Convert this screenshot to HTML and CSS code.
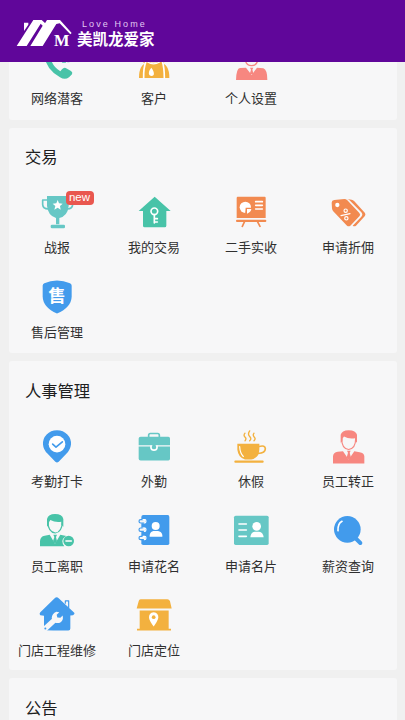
FILE: index.html
```html
<!DOCTYPE html>
<html lang="zh-CN">
<head>
<meta charset="utf-8">
<title>美凯龙爱家</title>
<link rel="stylesheet" href="styles.css">
</head>
<body>
<header class="header">
  <svg class="logo" viewBox="48 54 168 90">
    <path fill="#fff" d="M50 138L100 60H125L139 73L98 138H91L128 77L122 71L80 138ZM72 68H85V74L72 93ZM92 138L141 60H180L215 99L211 103L179 70L169 72L128 138Z"/>
    <text class="logo-m" x="162" y="138">M</text>
  </svg>
  <div class="brand">
    <span class="brand-en">Love Home</span>
    <span class="brand-cn">美凯龙爱家</span>
  </div>
</header>
<main class="content">
  <section class="card card-first">
    <div class="grid">
      <div class="item">
        <svg class="icon green" viewBox="117 135 108 108"><path d="M133 166Q138 209 180 232Q195 241 207 232L216 223Q219 217 213 213L197 204Q191 202 186 208L181 214Q163 203 156 187L163 178L150 155Z"/><path class="line green-line" d="M188 186H196M202 184H208"/></svg>
        <span class="label">网络潜客</span>
      </div>
      <div class="item">
        <svg class="icon yellow" viewBox="408 135 108 108"><circle cx="441" cy="173" r="18"/><circle cx="481" cy="173" r="18"/><path d="M417 234Q417 190 444 188H480Q508 190 508 234Z"/><path class="line" d="M438 184Q430 204 431 234M487 184Q493 204 493 234" /><path class="line thin" d="M443 186Q460 197 479 186"/><path fill="#fff" d="M454 203Q443 216 448 225Q455 231 461 225Q464 216 454 203Z"/></svg>
        <span class="label">客户</span>
      </div>
      <div class="item">
        <svg class="icon coral" viewBox="90 135 108 108"><path class="line coral-line" d="M128 165V184Q131 196 146 197Q161 196 163 184V165"/><path d="M99 240Q100 205 111 204L129 203L146 225L162 203L181 205Q193 209 193 240Z"/><path d="M141 203H151L148 209L152 223H140L144 209Z"/></svg>
        <span class="label">个人设置</span>
      </div>
    </div>
  </section>

  <section class="card">
    <h2 class="title">交易</h2>
    <div class="grid">
      <div class="item">
        <svg class="icon teal" viewBox="117 162 108 108"><path d="M141 168H206V198Q203 228 178 234V253H168V234Q144 227 141 198Z"/><path class="line teal-line" d="M141 180H128V194Q129 207 145 207M206 180H218V194Q217 207 202 207"/><rect x="152" y="254" width="43" height="11" rx="4"/><path fill="#fff" d="M173 180L177 190L188 191L180 198L182 209L173 203L163 209L166 198L158 191L169 190Z"/></svg>
        <span class="badge">new</span>
        <span class="label">战报</span>
      </div>
      <div class="item">
        <svg class="icon green" viewBox="408 162 108 108"><path d="M464 170L512 213H499V257Q499 262 494 262H434Q429 262 429 257V213H416Z"/><circle class="line" cx="463" cy="214" r="10"/><path class="line" d="M463 224V249M463 236H472M463 246H472"/></svg>
        <span class="label">我的交易</span>
      </div>
      <div class="item">
        <svg class="icon orange" viewBox="90 42 108 108"><path d="M104 50H185Q188 50 188 54V114H101V54Q101 50 104 50Z"/><rect x="99" y="119" width="91" height="7" rx="3"/><path class="line orange-line" d="M125 124L118 139M163 124L171 139"/><circle cx="127" cy="82" r="17" fill="#fff"/><path d="M128 83H149V105H126Z"/><path fill="#fff" d="M132 87H145Q144 97 132 101Z"/><path class="line" d="M158 65H178M158 76H178M158 87H178"/></svg>
        <span class="label">二手实收</span>
      </div>
      <div class="item">
        <svg class="icon orange" viewBox="381 42 108 108"><path d="M394 60L424 57Q429 57 433 61L469 99Q474 105 469 109L442 137Q437 141 432 137L390 93Q387 89 387 85L386 68Q386 61 394 60Z"/><path d="M432 57L446 59Q450 60 454 64L486 99Q489 104 485 109L459 137Q454 140 449 137L475 110Q481 104 475 97L438 59Z"/><circle cx="403" cy="75" r="6.5" fill="#fff"/><g class="line thin"><path d="M414 107L441 101"/><circle cx="428" cy="92" r="5"/><circle cx="430" cy="115" r="5"/></g></svg>
        <span class="label">申请折佣</span>
      </div>
      <div class="item">
        <svg class="icon blue" viewBox="117 25.5 108 108"><path d="M171 30Q191 31 210 38Q215 40 215 46V78Q214 111 171 129Q129 111 128 78V46Q128 40 133 38Q151 31 171 30Z"/><text class="shield-text" x="171" y="93">售</text></svg>
        <span class="label">售后管理</span>
      </div>
    </div>
  </section>

  <section class="card card-hr">
    <h2 class="title">人事管理</h2>
    <div class="grid">
      <div class="item">
        <svg class="icon blue" viewBox="117 22.5 108 108"><path d="M171 29Q190 29 202 42Q214 54 213 72Q211 88 199 100L176 124Q171 128 166 124L143 100Q130 88 129 72Q128 54 140 42Q152 29 171 29Z"/><circle cx="171" cy="71" r="25" fill="#fff"/><path class="line blue-line" d="M158 71L168 80L187 64"/></svg>
        <span class="label">考勤打卡</span>
      </div>
      <div class="item">
        <svg class="icon teal" viewBox="408 22.5 108 108"><path class="line teal-line" d="M446 50V44Q446 39 451 39H473Q478 39 478 44V50"/><path d="M422 49H505Q510 49 510 54V74H416V54Q416 49 422 49ZM416 78H510V115Q510 120 505 120H422Q416 120 416 115Z"/><path class="line" d="M453 77V82Q454 89 462 89Q470 89 471 82V77"/><circle cx="462" cy="78" r="6"/></svg>
        <span class="label">外勤</span>
      </div>
      <div class="item">
        <svg class="icon yellow" viewBox="90 22.5 108 108"><path d="M103 70H169V87Q168 106 157 112Q152 117 145 117H126Q106 112 103 88Z"/><path class="line yellow-line" d="M168 78Q187 73 187 85Q187 98 165 99"/><rect x="94" y="120" width="88" height="7" rx="3"/><path class="line yellow-line steam" d="M126 38Q120 45 127 51Q131 55 126 61M140 31Q133 41 140 48Q147 55 140 61M153 38Q148 44 154 50Q159 55 153 61"/><path class="line thin" d="M110 78Q111 98 121 108"/></svg>
        <span class="label">休假</span>
      </div>
      <div class="item">
        <svg class="icon coral" viewBox="381 22.5 108 108"><path class="line coral-line thin" d="M416 54Q416 85 437 87Q458 84 458 54"/><path d="M413 67V43Q416 29 437 29Q459 29 462 43V67L456 61V53Q437 56 423 48Q418 52 418 62Z"/><path d="M390 129V107Q391 96 404 94L420 92L437 117L454 92L470 95Q483 97 484 107V129Z"/><path d="M432 91H443L440 97L444 111L438 118L431 111L435 97Z"/></svg>
        <span class="label">员工转正</span>
      </div>
      <div class="item">
        <svg class="icon green" viewBox="117 21 108 108"><path class="line green-line thin" d="M144 50Q144 81 166 84Q186 81 187 50"/><path d="M141 65V42Q145 27 165 27Q187 27 190 42V65L184 59V50Q166 53 151 45Q146 50 146 60Z"/><path d="M120 124V108Q121 94 134 92L149 89L165 116L181 89L199 93Q188 98 187 109Q187 117 193 124Z"/><path d="M160 89H171L168 96L171 109L165 116L159 109L163 96Z"/><circle cx="206" cy="108" r="16"/><path class="line" d="M198 108H214"/></svg>
        <span class="label">员工离职</span>
      </div>
      <div class="item">
        <svg class="icon blue" viewBox="408 21 108 108"><path d="M430 30H503Q508 30 508 36V115Q508 120 503 120H430Q424 120 424 115V36Q424 30 430 30Z"/><circle cx="467" cy="63" r="12" fill="#fff"/><path fill="#fff" d="M449 95V90Q451 80 460 78H474Q485 80 487 90V95Z"/><path class="ring-gap" d="M420 49H436M420 74H436M420 99H436"/><path class="line blue-line thin" d="M429 44H422Q417 44 417 49Q417 54 422 54H433M429 69H422Q417 69 417 74Q417 79 422 79H433M429 94H422Q417 94 417 99Q417 104 422 104H433"/><path class="line thin" d="M429 44H434Q438 44 438 49Q438 54 433 54M429 69H434Q438 69 438 74Q438 79 433 79M429 94H434Q438 94 438 99Q438 104 433 104"/></svg>
        <span class="label">申请花名</span>
      </div>
      <div class="item">
        <svg class="icon teal" viewBox="90 21 108 108"><rect x="93" y="32" width="104" height="88" rx="5"/><path class="line" d="M108 57H130M108 75H130M108 94H130"/><circle cx="161" cy="64" r="13" fill="#fff"/><path fill="#fff" d="M142 97Q143 82 155 80H168Q181 82 182 97Z"/></svg>
        <span class="label">申请名片</span>
      </div>
      <div class="item">
        <svg class="icon blue" viewBox="381 21 108 108"><circle cx="433" cy="73" r="40"/><path class="handle" d="M460 102L472 114"/><path class="line" d="M405 77Q404 56 417 49"/></svg>
        <span class="label">薪资查询</span>
      </div>
      <div class="item">
        <svg class="icon blue" viewBox="117 19.5 108 108"><path d="M164 23Q170 18 176 23L222 66Q226 71 219 74L211 75V114Q211 120 205 120H160L132 119V76L121 74Q117 70 121 65Z"/><path class="line blue-line thin" d="M196 38V31H206V52"/><path class="wrench" d="M136 114L164 88"/><path fill="#f7f7f8" d="M155 83Q156 69 169 64L178 65L170 73L172 81L181 82L188 75Q191 89 182 95Q174 100 165 96Z"/><circle cx="136" cy="114" r="3"/></svg>
        <span class="label">门店工程维修</span>
      </div>
      <div class="item">
        <svg class="icon yellow" viewBox="408 19.5 108 108"><path d="M422 26H502Q508 26 510 32L515 54H410L416 32Q417 26 422 26ZM419 60H506V115H513V120H411V115H419Z"/><path fill="#fff" d="M461 65Q476 67 475 82Q473 92 461 108Q449 93 447 82Q446 67 461 65Z"/><circle cx="461" cy="80" r="5.5"/></svg>
        <span class="label">门店定位</span>
      </div>
    </div>
  </section>

  <section class="card card-last">
    <h2 class="title">公告</h2>
  </section>
</main>
</body>
</html>
```
FILE: styles.css
```css
* { box-sizing: border-box; }
body {
  margin: 0;
  height: 720px;
  overflow: hidden;
  background: #f0f0f0;
  color: #303030;
  font-family: "Noto Sans CJK SC", sans-serif;
}
.header {
  position: relative;
  z-index: 1;
  height: 62px;
  padding: 18px 0 0 16px;
  display: flex;
  background: #60069a;
  color: #fff;
}
.logo { width: 56px; height: 30px; overflow: visible; }
.logo-m {
  fill: #fff;
  font: bold 49px "Liberation Serif", serif;
}
.brand {
  display: flex;
  flex-direction: column;
  padding-left: 5px;
}
.brand-en {
  padding-left: 5px;
  font: 9px/13px "Liberation Sans", sans-serif;
  letter-spacing: 2.1px;
  color: #e3c9f2;
}
.brand-cn {
  margin-top: -2px;
  font-size: 15.5px;
  line-height: 18px;
  font-weight: 700;
}
.content {
  display: flex;
  flex-direction: column;
  gap: 8px;
  margin-top: -17.5px;
  padding: 0 8.5px;
}
.card {
  padding: 16.5px 0 10px;
  border-radius: 3px;
  background: #f7f7f8;
}
.card-first { padding-top: 0; padding-bottom: 11px; }
.card-hr { padding-top: 17.5px; padding-bottom: 9.5px; }
.card-last { height: 60px; }
.title {
  margin: 0 0 25.5px;
  padding-left: 16.5px;
  font-size: 16.3px;
  line-height: 24px;
  font-weight: 400;
  color: #202020;
}
.grid {
  display: grid;
  grid-template-columns: repeat(4, 1fr);
  row-gap: 21px;
}
.card-hr .grid { row-gap: 20.5px; }
.item {
  position: relative;
  height: 64px;
  display: flex;
  flex-direction: column;
  align-items: center;
  gap: 7px;
}
.card-hr .item { gap: 7.5px; }
.icon { width: 36px; height: 36px; flex: none; }
.label {
  font-size: 13px;
  line-height: 20px;
  white-space: nowrap;
}
.badge {
  position: absolute;
  left: 57px;
  top: -3px;
  width: 28px;
  height: 14px;
  border-radius: 4px;
  background: #e9574f;
  color: #fff;
  font: 11.5px/12px "Liberation Sans", sans-serif;
  text-align: center;
}
.green { fill: #48c3a8; }
.teal { fill: #66c7c5; }
.yellow { fill: #f3b13f; }
.coral { fill: #f78780; }
.orange { fill: #f28a50; }
.blue { fill: #429bec; }
.line {
  fill: none;
  stroke: #fff;
  stroke-width: 5;
  stroke-linecap: round;
  stroke-linejoin: round;
}
.green-line { stroke: #48c3a8; }
.teal-line { stroke: #66c7c5; }
.yellow-line { stroke: #f3b13f; }
.coral-line { stroke: #f78780; stroke-width: 4; }
.orange-line { stroke: #f28a50; }
.blue-line { stroke: #429bec; }
.thin { stroke-width: 3.5; }
.steam { stroke-width: 4; }
.handle { stroke: #429bec; stroke-width: 12; stroke-linecap: round; }
.wrench { stroke: #f7f7f8; stroke-width: 16; stroke-linecap: round; }
.ring-gap { stroke: #f7f7f8; stroke-width: 12; }
.shield-text {
  fill: #fff;
  font-size: 52px;
  font-weight: 700;
  text-anchor: middle;
}
```
